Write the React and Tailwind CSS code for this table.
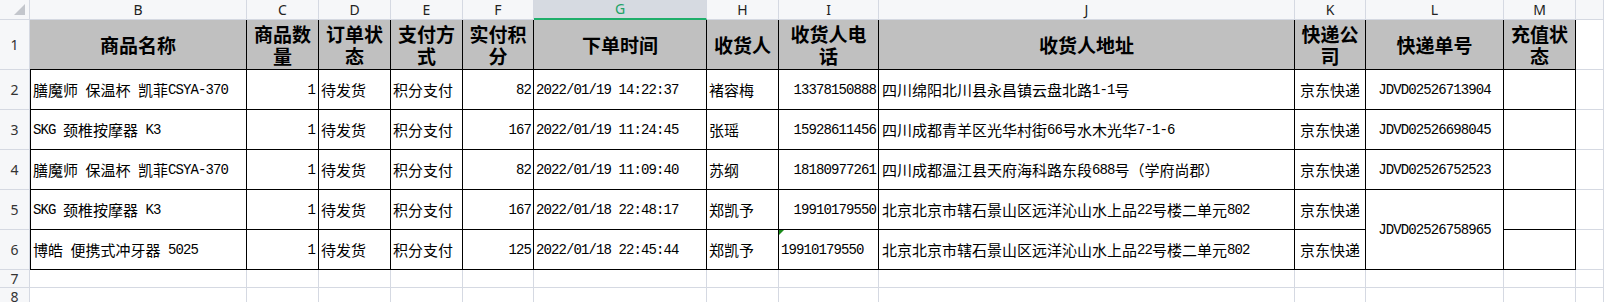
import React from "react";

const cols = ["B", "C", "D", "E", "F", "G", "H", "I", "J", "K", "L", "M"];

const heads = [
  ["商品名称"],
  ["商品数", "量"],
  ["订单状", "态"],
  ["支付方", "式"],
  ["实付积", "分"],
  ["下单时间"],
  ["收货人"],
  ["收货人电", "话"],
  ["收货人地址"],
  ["快递公", "司"],
  ["快递单号"],
  ["充值状", "态"],
];

const rows = [
  ["膳魔师 保温杯 凯菲CSYA-370", "1", "82", "2022/01/19 14:22:37", "褚容梅", "13378150888", "四川绵阳北川县永昌镇云盘北路1-1号", "JDVD02526713904"],
  ["SKG 颈椎按摩器 K3", "1", "167", "2022/01/19 11:24:45", "张瑶", "15928611456", "四川成都青羊区光华村街66号水木光华7-1-6", "JDVD02526698045"],
  ["膳魔师 保温杯 凯菲CSYA-370", "1", "82", "2022/01/19 11:09:40", "苏纲", "18180977261", "四川成都温江县天府海科路东段688号（学府尚郡）", "JDVD02526752523"],
  ["SKG 颈椎按摩器 K3", "1", "167", "2022/01/18 22:48:17", "郑凯予", "19910179550", "北京北京市辖石景山区远洋沁山水上品22号楼二单元802", "JDVD02526758965"],
  ["博皓 便携式冲牙器 5025", "1", "125", "2022/01/18 22:45:44", "郑凯予", "19910179550", "北京北京市辖石景山区远洋沁山水上品22号楼二单元802", null],
];

// latin runs in a mono face so they sit at half the CJK width, like SimSun
function Mixed({ text }) {
  const parts = text.split(/([\u0000-\u00ff]+)/).filter(Boolean);
  return parts.map((p, i) =>
    /^[\u0000-\u00ff]+$/.test(p) ? (
      <span key={i} className="font-['Liberation_Mono'] text-[14px] tracking-[-0.9px] whitespace-pre">
        {p}
      </span>
    ) : (
      <span key={i}>{p}</span>
    )
  );
}

const grid = "border-r border-b border-[#d5d9e2]";
const cell = "flex items-center border-r border-b border-black text-[15px] leading-none text-black whitespace-nowrap overflow-hidden";

function RowNum({ n }) {
  return (
    <div className={`${grid} bg-[#f6f7f9] flex items-center justify-center text-[14px] text-[#333] font-['Noto_Sans'] leading-none`}>
      {n}
    </div>
  );
}

export default function App() {
  return (
    <div className="w-[1604px] h-[302px] overflow-hidden bg-white font-['Noto_Sans_CJK_SC',sans-serif]">
      <div className="grid grid-cols-[30px_217px_72px_72px_72px_71px_173px_72px_100px_416px_71px_138px_72px_28px] grid-rows-[20px_50px_40px_40px_40px_40px_40px_18px_18px]">
        {/* column letters */}
        <div className={`${grid} bg-[#f6f7f9] flex items-end justify-end pr-[4px] pb-[4px]`}>
          <svg width="11" height="11" viewBox="0 0 11 11">
            <polygon points="11,0 11,11 0,11" fill="#c3c6cc" />
          </svg>
        </div>
        {cols.map((c) =>
          c === "G" ? (
            <div key={c} className="border-r border-b-2 border-r-[#d5d9e2] border-b-[#1fae6b] bg-[#d6dae1] flex items-center justify-center text-[14px] text-[#21a366] font-['Noto_Sans'] leading-none">
              {c}
            </div>
          ) : (
            <div key={c} className={`${grid} bg-[#f6f7f9] flex items-center justify-center text-[14px] text-[#222] font-['Noto_Sans'] leading-none`}>
              {c}
            </div>
          )
        )}
        <div className={`${grid} bg-[#f6f7f9]`} />

        {/* row 1: headings */}
        <RowNum n={1} />
        {heads.map((h, i) => (
          <div key={i} className="flex flex-col items-center justify-center bg-[#c0c0c0] border-r border-b border-black text-[19px] font-bold leading-[22px] text-black overflow-hidden">
            {h.map((l) => (
              <span key={l} className="block h-[22px] whitespace-nowrap">
                {l}
              </span>
            ))}
          </div>
        ))}
        <div className={grid} />

        {/* data rows */}
        {rows.map((r, i) => (
          <React.Fragment key={i}>
            <RowNum n={i + 2} />
            <div className={`${cell} border-l pl-[2px]`}>
              <Mixed text={r[0]} />
            </div>
            <div className={`${cell} justify-end pr-[3px]`}>
              <Mixed text={r[1]} />
            </div>
            <div className={`${cell} pl-[2px]`}>待发货</div>
            <div className={`${cell} pl-[2px]`}>积分支付</div>
            <div className={`${cell} justify-end pr-[2px]`}>
              <Mixed text={r[2]} />
            </div>
            <div className={`${cell} pl-[2px]`}>
              <Mixed text={r[3]} />
            </div>
            <div className={`${cell} pl-[2px]`}>{r[4]}</div>
            {i === 4 ? (
              <div className={`${cell} relative pl-[2px]`}>
                <span className="absolute left-0 top-0 w-0 h-0 border-t-[5px] border-r-[5px] border-t-[#1a8a1a] border-r-transparent" />
                <Mixed text={r[5]} />
              </div>
            ) : (
              <div className={`${cell} justify-end pr-[2px]`}>
                <Mixed text={r[5]} />
              </div>
            )}
            <div className={`${cell} pl-[3px]`}>
              <Mixed text={r[6]} />
            </div>
            <div className={`${cell} justify-center`}>京东快递</div>
            {r[7] && (
              <div className={`${cell} justify-center ${i === 3 ? "row-span-2" : ""}`}>
                <Mixed text={r[7]} />
              </div>
            )}
            <div className={cell} />
            <div className={grid} />
          </React.Fragment>
        ))}

        {/* empty rows */}
        {[7, 8].map((n) => (
          <React.Fragment key={n}>
            <RowNum n={n} />
            {cols.map((c) => (
              <div key={c} className={grid} />
            ))}
            <div className={grid} />
          </React.Fragment>
        ))}
      </div>
    </div>
  );
}
